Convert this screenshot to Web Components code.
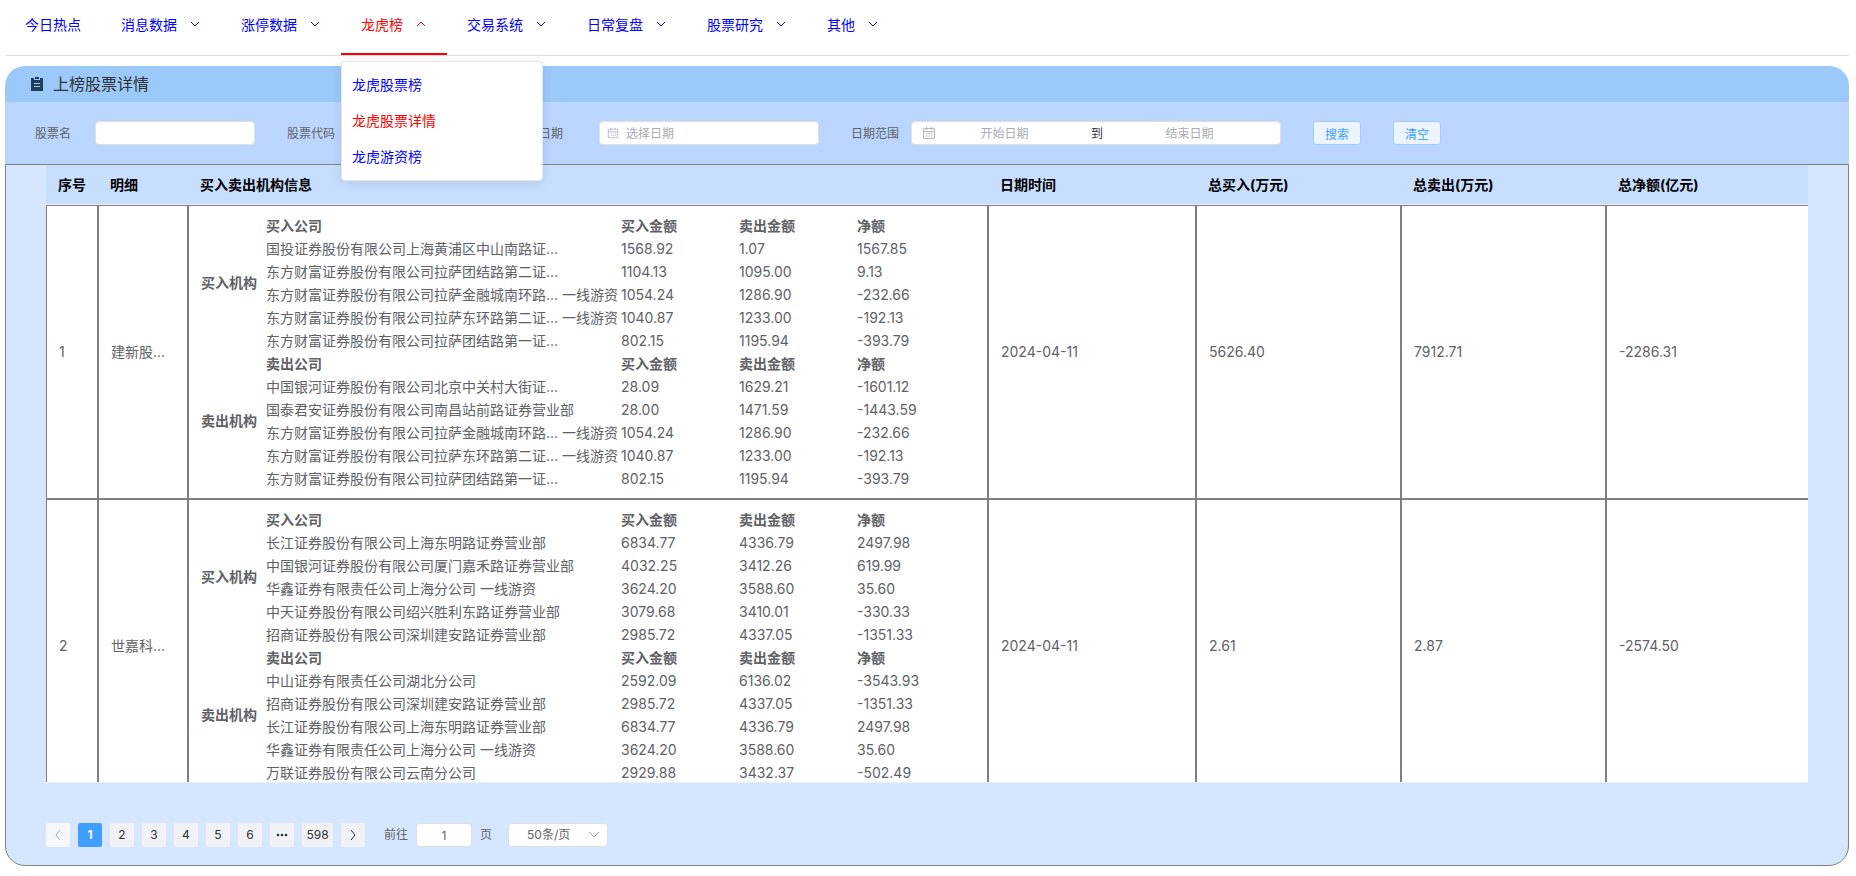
<!DOCTYPE html>
<html lang="zh-CN">
<head>
<meta charset="utf-8">
<title>上榜股票详情</title>
<style>
body{margin:0;font:14px/23px Inter,"Noto Sans CJK SC",sans-serif;color:#606266;background:#fff}
</style>
</head>
<body>
<stock-app></stock-app>
<script>
const define=(name,html,setup)=>customElements.define(name,class extends HTMLElement{
  connectedCallback(){
    if(this.shadowRoot)return;
    const t=document.createElement('template');
    t.innerHTML='<style>*{box-sizing:border-box}</style>'+(typeof html==='function'?html(this):html);
    this.attachShadow({mode:'open'}).append(t.content.cloneNode(true));
    if(setup)setup(this);
  }
});

define('nav-item',el=>`<style>
:host{display:block;position:relative}
a{display:flex;align-items:center;height:55px;padding:0 20px 5px;border-bottom:2px solid transparent;color:#00f;text-decoration:none;white-space:nowrap}
:host([active]) a{color:#f00;border-color:#f00}
svg{width:12px;height:12px;margin-left:12px}
:host([active]) svg{transform:rotate(180deg)}
</style><a href="#">${el.getAttribute('label')}${el.hasAttribute('plain')?'':'<svg viewBox="0 0 12 12" fill="none" stroke="currentColor"><path d="M2 4l4 4 4-4"/></svg>'}</a><slot></slot>`);

define('nav-menu',`<style>
:host{display:block;position:absolute;left:0;top:61px;z-index:5;width:202px;padding:5px 0;background:#fff;border:1px solid #e4e7ed;border-radius:4px;box-shadow:0 2px 12px rgba(0,0,0,.1)}
a{display:block;height:36px;line-height:36px;padding:0 10px;color:#00f;text-decoration:none}
a.on{color:#f00}
</style><a href="#">龙虎股票榜</a><a href="#" class="on">龙虎股票详情</a><a href="#">龙虎游资榜</a>`);

define('top-nav',`<style>
:host{display:block}
nav{display:flex;height:56px;border-bottom:1px solid #dcdfe6}
</style><nav>
<nav-item label="今日热点" plain></nav-item>
<nav-item label="消息数据"></nav-item>
<nav-item label="涨停数据"></nav-item>
<nav-item label="龙虎榜" active><nav-menu></nav-menu></nav-item>
<nav-item label="交易系统"></nav-item>
<nav-item label="日常复盘"></nav-item>
<nav-item label="股票研究"></nav-item>
<nav-item label="其他"></nav-item>
</nav>`);

define('panel-title',`<style>
:host{display:flex;align-items:center;height:36px;padding-left:24px;background:#9bc9fa;border-radius:20px 20px 0 0;color:#303133}
svg{width:16px;height:16px;margin-right:8px}
h1{margin:0;font-size:16px;font-weight:400}
</style><svg viewBox="0 0 16 16"><path fill="#233f58" fill-rule="evenodd" d="M6 1h4v2H6zM2 2h3v2h6V2h3v13H2zM5 7v1h6V7zM5 10v1h6v-1z"/></svg><h1><slot></slot></h1>`);

const calendar='<svg class="cal" viewBox="0 0 14 14" fill="none" stroke="#b4b8bf"><path d="M1.500 2.500h11v10h-11zM1.500 5.500h11M4.500 1v3M9.500 1v3M4 7.500h1.500M6.500 7.500H8M9 7.500h1.500M4 10h1.500M6.500 10H8M9 10h1.500"/></svg>';
define('search-form',`<style>
:host{display:block;background:#bad6fe}
form{display:flex;align-items:center;gap:32px;height:62px;padding-left:30px;font-size:12px;line-height:22px}
.f{display:flex;align-items:center}
label{width:60px;padding-top:2px}
input{min-width:0;height:22px;font:inherit;color:#606266;border:0;background:none;outline:0;padding:2px 0 0}
input::placeholder{color:#a8abb2;opacity:1}
.box{display:flex;align-items:center;height:24px;width:160px;padding:0 7px;background:#fff;border:1px solid #dcdfe6;border-radius:4px}
.box input{flex:1}
.date{width:220px}
.range{width:370px;padding:0 22px 0 10px}
.range input{text-align:center}
.range span{width:48px;padding-top:2px;text-align:center;color:#303133}
.cal{width:12px;height:12px;margin-right:7px;flex:none}
.range .cal{width:14px;height:14px;margin-right:0}
button{height:24px;width:48px;padding:2px 0 0;font:inherit;color:#409eff;background:#ecf5ff;border:1px solid #a0cfff;border-radius:3px}
</style><form>
<div class="f"><label for="n">股票名</label><div class="box"><input id="n"></div></div>
<div class="f"><label for="c">股票代码</label><div class="box"><input id="c"></div></div>
<div class="f"><label for="d">日期</label><div class="box date">${calendar}<input id="d" placeholder="选择日期"></div></div>
<div class="f"><label for="s">日期范围</label><div class="box range">${calendar}<input id="s" placeholder="开始日期"><span>到</span><input aria-label="结束日期" placeholder="结束日期"></div></div>
<button type="button">搜索</button><button type="button">清空</button>
</form>`);

const rows=[
{no:1,name:'建新股...',date:'2024-04-11',buy:'5626.40',sell:'7912.71',net:'-2286.31',groups:[
['买入',[
['国投证券股份有限公司上海黄浦区中山南路证...','1568.92','1.07','1567.85'],
['东方财富证券股份有限公司拉萨团结路第二证...','1104.13','1095.00','9.13'],
['东方财富证券股份有限公司拉萨金融城南环路... 一线游资','1054.24','1286.90','-232.66'],
['东方财富证券股份有限公司拉萨东环路第二证... 一线游资','1040.87','1233.00','-192.13'],
['东方财富证券股份有限公司拉萨团结路第一证...','802.15','1195.94','-393.79']]],
['卖出',[
['中国银河证券股份有限公司北京中关村大街证...','28.09','1629.21','-1601.12'],
['国泰君安证券股份有限公司南昌站前路证券营业部','28.00','1471.59','-1443.59'],
['东方财富证券股份有限公司拉萨金融城南环路... 一线游资','1054.24','1286.90','-232.66'],
['东方财富证券股份有限公司拉萨东环路第二证... 一线游资','1040.87','1233.00','-192.13'],
['东方财富证券股份有限公司拉萨团结路第一证...','802.15','1195.94','-393.79']]]]},
{no:2,name:'世嘉科...',date:'2024-04-11',buy:'2.61',sell:'2.87',net:'-2574.50',groups:[
['买入',[
['长江证券股份有限公司上海东明路证券营业部','6834.77','4336.79','2497.98'],
['中国银河证券股份有限公司厦门嘉禾路证券营业部','4032.25','3412.26','619.99'],
['华鑫证券有限责任公司上海分公司 一线游资','3624.20','3588.60','35.60'],
['中天证券股份有限公司绍兴胜利东路证券营业部','3079.68','3410.01','-330.33'],
['招商证券股份有限公司深圳建安路证券营业部','2985.72','4337.05','-1351.33']]],
['卖出',[
['中山证券有限责任公司湖北分公司','2592.09','6136.02','-3543.93'],
['招商证券股份有限公司深圳建安路证券营业部','2985.72','4337.05','-1351.33'],
['长江证券股份有限公司上海东明路证券营业部','6834.77','4336.79','2497.98'],
['华鑫证券有限责任公司上海分公司 一线游资','3624.20','3588.60','35.60'],
['万联证券股份有限公司云南分公司','2929.88','3432.37','-502.49']]]]}];

define('broker-list',`<style>
:host{display:block}
table{border-collapse:collapse;table-layout:fixed;width:774px}
.a{width:65px}.b{width:355px}.c{width:118px}
td,th{padding:0;height:23px;line-height:23px;text-align:left;white-space:nowrap}
th[rowspan]{padding-bottom:2px}
</style><table><colgroup><col class="a"><col class="b"><col class="c"><col class="c"><col class="c"></colgroup><tbody></tbody></table>`,el=>{
  el.shadowRoot.querySelector('tbody').innerHTML=rows[el.getAttribute('row')].groups.map(([kind,list])=>
    `<tr><th rowspan="6" scope="rowgroup">${kind}机构</th><th scope="col">${kind}公司</th><th scope="col">买入金额</th><th scope="col">卖出金额</th><th scope="col">净额</th></tr>`+
    list.map(r=>'<tr>'+r.map(v=>`<td>${v}</td>`).join('')+'</tr>').join('')).join('');
});

define('stock-table',`<style>
:host{display:block;height:618px;overflow:hidden;border-bottom:1px solid #ebeef5;background:#fff}
table{border-collapse:separate;border-spacing:0;table-layout:fixed;width:100%}
.c1{width:52px}.c2{width:90px}.c3{width:800px}.c4{width:208px}.c5{width:205px}
thead th{height:40px;padding:0 12px;text-align:left;color:#000;background:#c8deff;border-bottom:1px solid #ebeef5}
tbody>tr>td{padding:7px 12px 9px;border:1px solid #808080;white-space:nowrap}
tbody>tr>td.list{padding:8px 12px}
tbody>tr>td:last-child{border-right:0}
</style><table><colgroup><col class="c1"><col class="c2"><col class="c3"><col class="c4"><col class="c5"><col class="c5"><col></colgroup>
<thead><tr><th>序号</th><th>明细</th><th>买入卖出机构信息</th><th>日期时间</th><th>总买入(万元)</th><th>总卖出(万元)</th><th>总净额(亿元)</th></tr></thead>
<tbody>${rows.map((r,i)=>`<tr><td>${r.no}</td><td>${r.name}</td><td class="list"><broker-list row="${i}"></broker-list></td><td>${r.date}</td><td>${r.buy}</td><td>${r.sell}</td><td>${r.net}</td></tr>`).join('')}</tbody></table>`);

define('page-bar',`<style>
:host{display:flex;align-items:center;gap:8px;height:24px;font-size:12px;line-height:24px}
button{min-width:24px;height:24px;padding:0 4px;font:inherit;color:#303133;background:#f0f2f5;border:0;border-radius:2px;display:flex;align-items:center;justify-content:center}
button.on{background:#409eff;color:#fff;font-weight:700}
button:disabled{color:#a8abb2;background:#f5f7fa}
svg{width:12px;height:12px}
label{display:flex;align-items:center;gap:8px;margin:0 8px 0 11px}
input,select{height:24px;font:inherit;line-height:22px;color:#606266;background:#fff;border:1px solid #dcdfe6;border-radius:4px;margin:0}
input{width:56px;padding:0;text-align:center}
.sel{position:relative}
select{display:block;width:100px;appearance:none;padding:0 24px 0 18px}
.sel svg{position:absolute;right:8px;top:6px;color:#a8abb2;pointer-events:none}
.wide{min-width:31px}
</style>
<button disabled aria-label="上一页"><svg viewBox="0 0 12 12" fill="none" stroke="currentColor"><path d="M8 1L4 6l4 5"/></svg></button>
<button class="on">1</button><button>2</button><button>3</button><button>4</button><button>5</button><button>6</button>
<button aria-label="更多"><svg viewBox="0 0 12 12" fill="currentColor"><circle cx="2" cy="6" r="1.300"/><circle cx="6" cy="6" r="1.300"/><circle cx="10" cy="6" r="1.300"/></svg></button>
<button class="wide">598</button>
<button aria-label="下一页"><svg viewBox="0 0 12 12" fill="none" stroke="currentColor"><path d="M4 1l4 5-4 5"/></svg></button>
<label>前往<input value="1">页</label>
<div class="sel"><select aria-label="每页条数"><option>50条/页</option></select><svg viewBox="0 0 12 12" fill="none" stroke="currentColor"><path d="M1 3l5 5 5-5"/></svg></div>`);

define('stock-app',`<style>
:host{display:block;padding:0 7px 0 5px}
main{margin-top:10px}
section{border:1px solid #808080;border-radius:0 0 20px 20px;background:#d6e6fe;padding:0 40px 18px}
page-bar{margin-top:40px}
</style><top-nav></top-nav><main><panel-title>上榜股票详情</panel-title><search-form></search-form><section><stock-table></stock-table><page-bar></page-bar></section></main>`);
</script>
</body>
</html>
